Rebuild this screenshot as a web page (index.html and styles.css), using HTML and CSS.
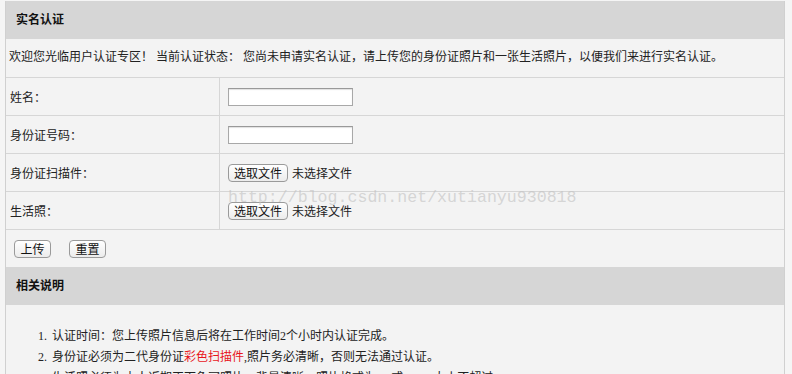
FILE: index.html
```html
<!DOCTYPE html>
<html lang="zh-CN">
  <head>
    <meta charset="UTF-8" />
    <title>实名认证</title>
    <link rel="stylesheet" href="styles.css">
  </head>
  <body>
    <div class="box">
      <div class="title">实名认证</div>
      <div class="welcome">欢迎您光临用户认证专区！ 当前认证状态： 您尚未申请实名认证，请上传您的身份证照片和一张生活照片，以便我们来进行实名认证。</div>

      <div class="row">
        <div class="label">姓名：</div>
        <div class="field"><span class="input"></span></div>
      </div>
      <div class="row">
        <div class="label">身份证号码：</div>
        <div class="field"><span class="input"></span></div>
      </div>
      <div class="row">
        <div class="label">身份证扫描件：</div>
        <div class="field"><span class="btn file">选取文件</span><span class="none">未选择文件</span></div>
      </div>
      <div class="row">
        <div class="label">生活照：</div>
        <div class="field"><span class="btn file">选取文件</span><span class="none">未选择文件</span></div>
      </div>

      <div class="actions">
        <span class="btn">上传</span>
        <span class="btn">重置</span>
      </div>

      <div class="title">相关说明</div>
      <ol class="notes">
        <li>认证时间：您上传照片信息后将在工作时间2个小时内认证完成。</li>
        <li>身份证必须为二代身份证<span class="red">彩色扫描件</span>,照片务必清晰，否则无法通过认证。</li>
        <li>生活照必须为本人近期正面免冠照片，背景清晰，照片格式为jpg或png，大小不超过2M。</li>
      </ol>

      <div class="mark">http://blog.csdn.net/xutianyu930818</div>
    </div>
  </body>
</html>
```

FILE: styles.css
```css
* {
  margin: 0;
  padding: 0;
  box-sizing: border-box;
}

body {
  background: #f5f5f5;
  font-family: "Liberation Serif", "Noto Sans CJK SC", serif;
  font-size: 12px;
  color: #222;
}

.box {
  position: relative;
  margin: 1px 0 0 5px;
  width: 780px;
  background: #f3f3f3;
  border-left: 1px solid #d0d0d0;
  border-right: 1px solid #d0d0d0;
}

.title {
  height: 38px;
  line-height: 38px;
  padding-left: 10px;
  background: #d6d6d6;
  font-weight: bold;
  color: #111;
}

.welcome {
  height: 39px;
  line-height: 37px;
  padding-left: 3px;
  border-bottom: 1px solid #d6d6d6;
}

.row {
  display: flex;
  height: 38px;
  border-bottom: 1px solid #d6d6d6;
}

.label {
  width: 214px;
  padding-left: 4px;
  border-right: 1px solid #d6d6d6;
  display: flex;
  align-items: center;
}

.field {
  flex: 1;
  padding-left: 8px;
  display: flex;
  align-items: center;
}

.input {
  display: block;
  width: 125px;
  height: 18px;
  background: #fff;
  border: 1px solid #a8a8a8;
  border-top-color: #999;
  box-shadow: inset 0 1px 1px #e0e0e0;
}

.btn {
  display: inline-flex;
  align-items: center;
  justify-content: center;
  height: 18px;
  padding: 0 6px;
  border: 1px solid #9a9a9a;
  border-radius: 4px;
  background: linear-gradient(#ffffff, #ececec);
  color: #111;
  font-size: 12px;
}

.btn.file {
  width: 60px;
  padding: 0;
}

.none {
  margin-left: 4px;
}

.actions {
  height: 37px;
  padding-left: 8px;
  display: flex;
  align-items: center;
  gap: 18px;
}

.actions .btn {
  width: 37px;
  padding: 0;
}

.notes {
  padding: 21px 0 0 44px;
  line-height: 21px;
}

.notes li {
  padding-left: 2px;
}

.red {
  color: #e8161b;
}

.mark {
  position: absolute;
  left: 222px;
  top: 187px;
  font-family: "Liberation Mono", "DejaVu Sans Mono", monospace;
  font-size: 16.6px;
  color: rgba(195, 195, 195, 0.65);
  pointer-events: none;
}
```
